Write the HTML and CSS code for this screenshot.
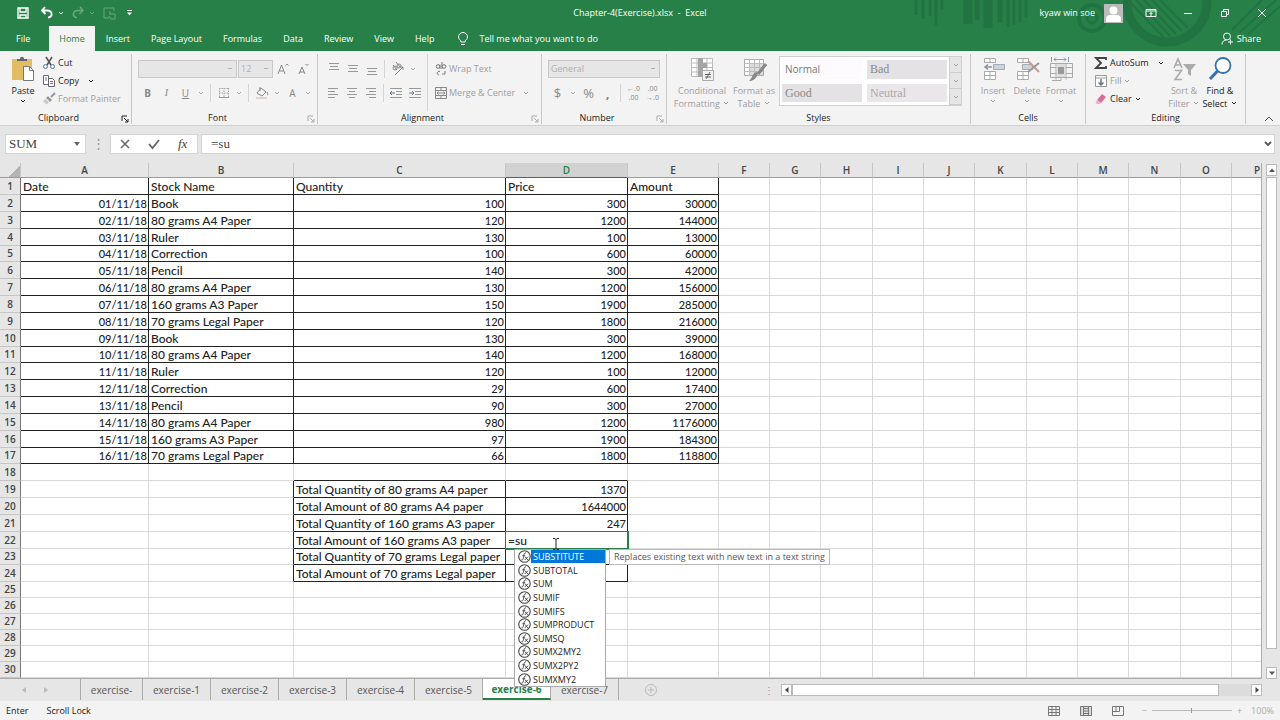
FILE: index.html
```
<!DOCTYPE html>
<html lang="en">
<head>
    <meta charset="UTF-8">
    <meta name="viewport" content="width=device-width, initial-scale=1.0">
    <title>Chapter-4(Exercise).xlsx - Excel</title>
    <link rel="stylesheet" href="styles.css">
</head>
<body>

<svg class="defs" aria-hidden="true">
    <symbol id="caret" viewBox="0 0 8 8"><path d="M2 3l2 2 2-2" fill="none" stroke="currentColor"/></symbol>
    <symbol id="launch" viewBox="0 0 8 8"><path d="M1 6V1h5M3 3l4 4M7 4v3H4" fill="none" stroke="currentColor"/></symbol>
    <symbol id="fx" viewBox="0 0 12 12"><circle cx="6" cy="6" r="5.3" fill="#fff" stroke="#444"/><path d="M7.5 2.7c-2-.6-2 2-2.4 4s-.7 2.8-1.9 2.4M4 5.3h2.6M6.6 6.2l2.4 3M9.2 6.2l-3 3" fill="none" stroke="#444" stroke-width=".9"/></symbol>
</svg>

<header class="top">
    <svg class="pattern" viewBox="0 0 400 51" aria-hidden="true">
        <g stroke="#227342" fill="none">
            <path stroke-width="3" d="M36 0v15M43 0v19M50 0v16M56 0v25M62 0v10M128 0v27M134 0v25M140 0v22M146 0v18"/>
            <path stroke-width="9" d="M88 0v24M108 0v28"/>
            <path stroke-width="5" d="M97 0v20M120 0v22"/>
            <circle cx="212" cy="18" r="13" stroke-width="4"/>
            <circle cx="212" cy="18" r="5" stroke-width="3"/>
            <circle cx="287" cy="2" r="40" stroke-width="9"/>
            <path stroke-width="2" d="M248 0l36 38M256 0l34 36M264 0l32 34M272 0l30 31M280 0l28 28M360 32l36-32M352 30l30-30M368 34l32-28"/>
        </g>
    </svg>
    <div class="title-bar">
        <div class="quick">
            <button type="button" aria-label="Save"><svg width="14" height="14" viewBox="0 0 14 14"><path d="M2 2h10v10H2zM4 2v4h6V2M4 12V9h6v3" fill="none" stroke="#fff" stroke-width="1.4"/></svg></button>
            <button type="button" aria-label="Undo"><svg width="14" height="14" viewBox="0 0 14 14"><path d="M5 1L2 4.500 5.500 8M2 4.500h5c6 0 6 7 1 7" fill="none" stroke="#fff" stroke-width="1.8"/></svg></button>
            <svg class="caret" width="8" height="8"><use href="#caret"/></svg>
            <button type="button" class="faded" aria-label="Redo"><svg width="14" height="14" viewBox="0 0 14 14"><path d="M9 1l3 3.500L8.500 8M12 4.500H7c-6 0-6 7-1 7" fill="none" stroke="#fff" stroke-width="1.600"/></svg></button>
            <svg class="caret faded" width="8" height="8"><use href="#caret"/></svg>
            <button type="button" class="faded" aria-label="Touch mode"><svg width="16" height="14" viewBox="0 0 16 14"><path d="M7 12H2V2h10v3M8 9V5M8 8h5v5H9l-2-3" fill="none" stroke="#fff"/></svg></button>
            <button type="button" aria-label="Customize toolbar"><svg width="10" height="10" viewBox="0 0 10 10"><path d="M3 2.500h5" stroke="#fff"/><path d="M3 4.500h5L5.500 7.500z" fill="#fff"/></svg></button>
        </div>
        <div class="file-name">Chapter-4(Exercise).xlsx&nbsp; -&nbsp; Excel</div>
        <div class="account">
            <span>kyaw win soe</span>
            <svg class="avatar" width="19" height="19" viewBox="0 0 19 19"><path d="M0 0h19v19H0z" fill="#b9bdb9"/><circle cx="9.500" cy="6.500" r="4" fill="#fff"/><path d="M2 18v-3c0-3 2-4 4-4h7c2 0 4 1 4 4v3z" fill="#fff"/></svg>
            <div class="window-buttons">
                <button type="button" aria-label="Ribbon options"><svg width="12" height="12" viewBox="0 0 12 12"><path d="M1 2.500h10v7H1zM1 4h10M6 9V5.500M4.500 7L6 5.500 7.500 7" fill="none" stroke="#fff"/></svg></button>
                <button type="button" aria-label="Minimize"><svg width="10" height="10" viewBox="0 0 10 10"><path d="M1 5.500h8" stroke="#fff"/></svg></button>
                <button type="button" aria-label="Restore"><svg width="10" height="10" viewBox="0 0 10 10"><path d="M1.500 3.500h5v5h-5zM3.500 3V1.500h5v5H7" fill="none" stroke="#fff"/></svg></button>
                <button type="button" aria-label="Close"><svg width="10" height="10" viewBox="0 0 10 10"><path d="M1 1l8 8M9 1L1 9" stroke="#fff"/></svg></button>
            </div>
        </div>
    </div>
    <nav class="menu">
        <a href="#">File</a>
        <a href="#" class="active">Home</a>
        <a href="#">Insert</a>
        <a href="#">Page Layout</a>
        <a href="#">Formulas</a>
        <a href="#">Data</a>
        <a href="#">Review</a>
        <a href="#">View</a>
        <a href="#">Help</a>
        <a href="#" class="tell"><svg width="12" height="14" viewBox="0 0 12 14"><path d="M4 10c0-2-2.500-2.500-2.500-5a4.500 4.500 0 0 1 9 0c0 2.500-2.500 3-2.500 5zM4 12.500h4" fill="none" stroke="#fff"/></svg>Tell me what you want to do</a>
        <a href="#" class="share"><svg width="13" height="13" viewBox="0 0 13 13"><circle cx="6" cy="4.500" r="3.500" fill="none" stroke="#fff"/><path d="M1 12.500c0-3 2-4.500 4.500-4.500M9.500 7.500v5M7 10h5" fill="none" stroke="#fff"/></svg>Share</a>
    </nav>
</header>

<section class="ribbon">
    <div class="group clipboard">
        <div class="tools">
            <button type="button" class="big">
                <svg width="26" height="26" viewBox="0 0 26 26"><path d="M2 3h20v21H2z" fill="#e3bd62"/><path d="M7 5V3h3c0-3 4-3 4 0h3v2z" fill="#666"/><path d="M13.500 10.500h6l4 4v10h-10z" fill="#fff" stroke="#777"/><path d="M19.500 10.500v4h4" fill="none" stroke="#777"/></svg>
                <span>Paste</span>
                <svg width="8" height="8"><use href="#caret"/></svg>
            </button>
            <div class="stack">
                <button type="button"><svg width="14" height="14" viewBox="0 0 14 14"><path d="M4 1l5 8M10 1L5 9" stroke="#555" stroke-width="1.500"/><circle cx="3.500" cy="10.500" r="2" fill="none" stroke="#4a7ba8"/><circle cx="10.500" cy="10.500" r="2" fill="none" stroke="#4a7ba8"/></svg>Cut</button>
                <button type="button"><svg width="14" height="14" viewBox="0 0 14 14"><path d="M1.500 1.500h5v9h-5zM6.500 4.500h4l2 2v6h-6z" fill="#fff" stroke="#667"/><path d="M3 4h2M3 6h2M8 7.500h3M8 9.500h3" stroke="#4a7ba8"/></svg>Copy<svg class="gap" width="8" height="8"><use href="#caret"/></svg></button>
                <button type="button" disabled><svg width="14" height="14" viewBox="0 0 14 14"><path d="M13 1L9 5" stroke="#999" stroke-width="2"/><path d="M6 4l4 4-2 2-4-4z" fill="#999"/><path d="M3.500 7L7 10.500l-3 2L1 9z" fill="#c9c9c9"/></svg>Format Painter</button>
            </div>
        </div>
        <div class="label">Clipboard<svg width="8" height="8"><use href="#launch"/></svg></div>
    </div>

    <div class="group font">
        <div class="rows">
            <div class="row">
                <select class="font-name" aria-label="Font" disabled><option></option></select>
                <select class="font-size" aria-label="Font size" disabled><option>12</option></select>
                <button type="button" class="letter" disabled aria-label="Increase font size"><svg width="14" height="14" viewBox="0 0 14 14"><path d="M2 12L5.500 3 9 12M3.500 9h4M9.500 3.500L11 2l1.500 1.500" fill="none" stroke="#888"/></svg></button>
                <button type="button" class="letter" disabled aria-label="Decrease font size"><svg width="14" height="14" viewBox="0 0 14 14"><path d="M3 12l3-7 3 7M4 10h4M9.500 2L11 3.500 12.500 2" fill="none" stroke="#888"/></svg></button>
            </div>
            <div class="row">
                <button type="button" class="glyph" disabled><b>B</b></button>
                <button type="button" class="glyph serif" disabled><i>I</i></button>
                <button type="button" class="glyph" disabled><u>U</u></button>
                <svg class="drop" width="8" height="8"><use href="#caret"/></svg>
                <span class="sep"></span>
                <button type="button" class="glyph" disabled aria-label="Borders"><svg width="12" height="12" viewBox="0 0 12 12"><path d="M1.500 1v9M6 1v9M10.500 1v9M1 1.500h10M1 6h10" fill="none" stroke="#aaa" stroke-dasharray="1.500 1"/><path d="M1 10.500h10" stroke="#999"/></svg></button>
                <svg class="drop" width="8" height="8"><use href="#caret"/></svg>
                <span class="sep"></span>
                <button type="button" class="glyph" disabled aria-label="Fill color"><svg width="14" height="14" viewBox="0 0 14 14"><path d="M6 2l5 4-4 4-5-3zM5 5V1M12 6c1 2 1 3 0 3" fill="none" stroke="#888"/><path d="M1 11h11v2H1z" fill="#e3d3c8"/></svg></button>
                <svg class="drop" width="8" height="8"><use href="#caret"/></svg>
                <button type="button" class="glyph" disabled>A</button>
                <svg class="drop" width="8" height="8"><use href="#caret"/></svg>
            </div>
        </div>
        <div class="label">Font<svg class="off" width="8" height="8"><use href="#launch"/></svg></div>
    </div>

    <div class="group alignment">
        <div class="tools">
            <div class="rows">
                <div class="row">
                    <button type="button" class="glyph" disabled aria-label="Top align"><svg width="12" height="12" viewBox="0 0 12 12"><path d="M1 .5h10M2 3.500h8M1 6.500h10" stroke="#999"/></svg></button>
                    <button type="button" class="glyph" disabled aria-label="Middle align"><svg width="12" height="12" viewBox="0 0 12 12"><path d="M1 2.500h10M2 5.500h8M1 8.500h10" stroke="#999"/></svg></button>
                    <button type="button" class="glyph" disabled aria-label="Bottom align"><svg width="12" height="12" viewBox="0 0 12 12"><path d="M1 5.500h10M2 8.500h8M1 11.500h10" stroke="#999"/></svg></button>
                    <span class="sep"></span>
                    <button type="button" class="glyph" disabled aria-label="Orientation"><svg width="14" height="14" viewBox="0 0 14 14"><circle cx="4" cy="6" r="2" fill="none" stroke="#888"/><circle cx="8" cy="4" r="2" fill="none" stroke="#888"/><path d="M2 3l4 5M5 0l4 5M4 13l8-8M12 8V5H9" fill="none" stroke="#888"/></svg></button>
                    <svg class="drop" width="8" height="8"><use href="#caret"/></svg>
                </div>
                <div class="row">
                    <button type="button" class="glyph" disabled aria-label="Align left"><svg width="12" height="12" viewBox="0 0 12 12"><path d="M1 1.500h10M1 4.500h7M1 7.500h10M1 10.500h7" stroke="#999"/></svg></button>
                    <button type="button" class="glyph" disabled aria-label="Center"><svg width="12" height="12" viewBox="0 0 12 12"><path d="M1 1.500h10M3 4.500h6M1 7.500h10M3 10.500h6" stroke="#999"/></svg></button>
                    <button type="button" class="glyph" disabled aria-label="Align right"><svg width="12" height="12" viewBox="0 0 12 12"><path d="M1 1.500h10M4 4.500h7M1 7.500h10M4 10.500h7" stroke="#999"/></svg></button>
                    <span class="sep"></span>
                    <button type="button" class="glyph" disabled aria-label="Decrease indent"><svg width="14" height="12" viewBox="0 0 14 12"><path d="M1 1.500h12M7 4.500h6M7 7.500h6M1 10.500h12" stroke="#999"/><path d="M6 6H1M3 4L1 6l2 2" fill="none" stroke="#678"/></svg></button>
                    <button type="button" class="glyph" disabled aria-label="Increase indent"><svg width="14" height="12" viewBox="0 0 14 12"><path d="M1 1.500h12M7 4.500h6M7 7.500h6M1 10.500h12" stroke="#999"/><path d="M1 6h5M4 4l2 2-2 2" fill="none" stroke="#678"/></svg></button>
                </div>
            </div>
            <div class="rows wide">
                <div class="row">
                    <button type="button" disabled><svg width="14" height="14" viewBox="0 0 14 14"><circle cx="4" cy="4.500" r="1.800" fill="none" stroke="#777"/><path d="M6 2.500V7M8 0v7M6 9.500c-3-1-4 3-1 3.500M8 12h3V9" fill="none" stroke="#777"/><circle cx="10" cy="4.500" r="1.800" fill="none" stroke="#777"/></svg>Wrap Text</button>
                </div>
                <div class="row">
                    <button type="button" disabled><svg width="14" height="14" viewBox="0 0 14 14"><path d="M1.500 1.500h11v11h-11zM1.500 4.500h11M1.500 9.500h11M7 1.500v3M7 9.500v3M3 7h8M4.500 5.500L3 7l1.500 1.500M9.500 5.500L11 7 9.500 8.500" fill="none" stroke="#888"/></svg>Merge &amp; Center<svg class="gap" width="8" height="8"><use href="#caret"/></svg></button>
                </div>
            </div>
        </div>
        <div class="label">Alignment<svg class="off" width="8" height="8"><use href="#launch"/></svg></div>
    </div>

    <div class="group number">
        <div class="rows">
            <div class="row">
                <select class="format" aria-label="Number format" disabled><option>General</option></select>
            </div>
            <div class="row">
                <button type="button" class="glyph large" disabled>$</button>
                <svg class="drop" width="8" height="8"><use href="#caret"/></svg>
                <button type="button" class="glyph large" disabled>%</button>
                <button type="button" class="glyph large" disabled><b>,</b></button>
                <span class="sep"></span>
                <button type="button" class="glyph tiny" disabled><span>←.0</span><span>.00</span></button>
                <button type="button" class="glyph tiny" disabled><span>.00</span><span>→.0</span></button>
            </div>
        </div>
        <div class="label">Number<svg class="off" width="8" height="8"><use href="#launch"/></svg></div>
    </div>

    <div class="group styles">
        <div class="tools">
            <button type="button" class="big" disabled>
                <svg width="26" height="26" viewBox="0 0 26 26"><path d="M2.500 2.500h21v18h-21zM2.500 7h21M2.500 11.500h21M2.500 16h21M8 2.500v18M18 2.500v18" fill="#fff" stroke="#bbb"/><path d="M9 2h5v5H9zM9 7h9v5H9zM9 12h5v9H9z" fill="#a5a5a5"/><path d="M13.500 14.500h11v10h-11z" fill="#f3f3f3" stroke="#aaa"/><path d="M16 18.500h6M16 21h6M21 16l-4 7" stroke="#666"/></svg>
                <span>Conditional<br>Formatting <svg width="8" height="8"><use href="#caret"/></svg></span>
            </button>
            <button type="button" class="big" disabled>
                <svg width="26" height="26" viewBox="0 0 26 26"><path d="M3.500 3.500h19v16h-19z" fill="#fff" stroke="#aaa"/><path d="M9 8h13v11H9z" fill="#ddd"/><path d="M3.500 7.500h19M3.500 11.500h19M3.500 15.500h19M8.500 3.500v16M13.500 3.500v16M18.500 3.500v16" stroke="#bbb"/><path d="M25 8l-8 10" stroke="#888" stroke-width="3"/><path d="M17 17c-2 7-6 8-9 8 3-2 3-7 7-9z" fill="#888"/></svg>
                <span>Format as<br>Table <svg width="8" height="8"><use href="#caret"/></svg></span>
            </button>
            <div class="gallery">
                <div class="swatches">
                    <button type="button" class="normal" disabled>Normal</button>
                    <button type="button" class="bad" disabled>Bad</button>
                    <button type="button" class="good" disabled>Good</button>
                    <button type="button" class="neutral" disabled>Neutral</button>
                </div>
                <div class="steps">
                    <button type="button" disabled aria-label="Previous"><svg width="8" height="8"><use href="#caret"/></svg></button>
                    <button type="button" disabled aria-label="Next"><svg width="8" height="8"><use href="#caret"/></svg></button>
                    <button type="button" disabled aria-label="More"><svg width="8" height="8"><use href="#caret"/></svg></button>
                </div>
            </div>
        </div>
        <div class="label">Styles</div>
    </div>

    <div class="group cells">
        <div class="tools">
            <button type="button" class="big" disabled>
                <svg width="26" height="26" viewBox="0 0 26 26"><path d="M4.500 2.500h11v4h-11zM10 2.500v4M4.500 15.500h11v8h-11zM10 15.500v8M4.500 19.500h11" fill="#fff" stroke="#aaa"/><path d="M13.500 8.500h11v5h-11z" fill="#cdd3da" stroke="#a5abb2"/><path d="M12 11H5M8 8.500L5 11l3 2.500" fill="none" stroke="#8a93a0" stroke-width="1.500"/></svg>
                <span>Insert</span>
                <svg width="8" height="8"><use href="#caret"/></svg>
            </button>
            <button type="button" class="big" disabled>
                <svg width="26" height="26" viewBox="0 0 26 26"><path d="M3.500 2.500h11v4h-11zM9 2.500v4M3.500 15.500h11v8h-11zM9 15.500v8M3.500 19.500h11" fill="#fff" stroke="#aaa"/><path d="M8.500 8.500h10v5h-10z" fill="#cdd3da" stroke="#a5abb2"/><path d="M14 5l11 11" stroke="#c79a90" stroke-width="2"/><path d="M25 7L14 16" stroke="#999" stroke-width="2"/></svg>
                <span>Delete</span>
                <svg width="8" height="8"><use href="#caret"/></svg>
            </button>
            <button type="button" class="big" disabled>
                <svg width="26" height="26" viewBox="0 0 26 26"><path d="M3.500 1v5M20.500 1v5M6 3.500h12M8 1.500L6 3.500l2 2M16 1.500l2 2-2 2" fill="none" stroke="#7f9fc0"/><path d="M2.500 7.500h22v14h-22zM2.500 11.500h22M2.500 17.500h22M8 7.500v16M18 7.500v16M4 24.500h9v-3" fill="none" stroke="#aaa"/><path d="M8.500 8h9v13h-9z" fill="#ddd"/><path d="M10 11h6v7h-6z" fill="#999"/></svg>
                <span>Format</span>
                <svg width="8" height="8"><use href="#caret"/></svg>
            </button>
        </div>
        <div class="label">Cells</div>
    </div>

    <div class="group editing">
        <div class="tools">
            <div class="stack">
                <button type="button"><svg width="14" height="14" viewBox="0 0 14 14"><path d="M12 4V2H2l5 5-5 5h10v-2" fill="none" stroke="#444" stroke-width="1.800"/></svg>AutoSum<svg class="gap" width="8" height="8"><use href="#caret"/></svg></button>
                <button type="button" disabled><svg width="14" height="14" viewBox="0 0 14 14"><path d="M1.500 1.500h11v11h-11zM1.500 4h11" fill="#fff" stroke="#999"/><path d="M7 5v6M4.500 8.500L7 11l2.500-2.500" fill="none" stroke="#678" stroke-width="1.500"/></svg>Fill<svg width="8" height="8"><use href="#caret"/></svg></button>
                <button type="button"><svg width="14" height="14" viewBox="0 0 14 14"><path d="M8 2l4 3-5 6-4-3z" fill="#d86f9b"/><path d="M3 8l4 3-1 1H3L1.500 10.500z" fill="#e7b3c8"/></svg>Clear<svg width="8" height="8"><use href="#caret"/></svg></button>
            </div>
            <button type="button" class="big" disabled>
                <svg width="26" height="26" viewBox="0 0 26 26"><path d="M3 12L7 3l4 9M4.500 9h5M4 14.500h6.500L4 23.500h7" fill="none" stroke="#aaa" stroke-width="1.600"/><path d="M12 8h13l-5 6v6l-3-2v-4z" fill="#aaa"/></svg>
                <span>Sort &amp;<br>Filter <svg width="8" height="8"><use href="#caret"/></svg></span>
            </button>
            <button type="button" class="big">
                <svg width="26" height="26" viewBox="0 0 26 26"><circle cx="16" cy="9.500" r="7.500" fill="#fff" stroke="#3672ad" stroke-width="1.800"/><path d="M10.500 15L3 23" stroke="#3672ad" stroke-width="3"/></svg>
                <span>Find &amp;<br>Select <svg width="8" height="8"><use href="#caret"/></svg></span>
            </button>
        </div>
        <div class="label">Editing</div>
    </div>
    <button type="button" class="collapse" aria-label="Collapse the ribbon"><svg width="10" height="6" viewBox="0 0 10 6"><path d="M1 5l4-4 4 4" fill="none" stroke="#555"/></svg></button>
</section>

<section class="formula-bar">
    <div class="name-box">
        <input type="text" aria-label="Name box" value="SUM">
        <svg width="8" height="6" viewBox="0 0 8 6"><path d="M1 1h6L4 5z" fill="#666"/></svg>
    </div>
    <span class="dots">⋮</span>
    <div class="formula-buttons">
        <button type="button" aria-label="Cancel"><svg width="12" height="12" viewBox="0 0 12 12"><path d="M2 2l8 8M10 2l-8 8" stroke="#666" stroke-width="1.500"/></svg></button>
        <button type="button" aria-label="Enter"><svg width="12" height="12" viewBox="0 0 12 12"><path d="M1 6l3.500 4L11 2" fill="none" stroke="#666" stroke-width="1.800"/></svg></button>
        <button type="button" aria-label="Insert function" class="serif"><i>fx</i></button>
    </div>
    <div class="formula">
        <input type="text" aria-label="Formula" value="=su">
        <svg width="8" height="6" viewBox="0 0 8 6"><path d="M1 1l3 3 3-3" fill="none" stroke="#555" stroke-width="1.800"/></svg>
    </div>
</section>

<main class="sheet">
    <div class="grid-view">
        <table class="grid" id="grid"></table>
    </div>
    <div class="scroll-v">
        <button type="button" aria-label="Scroll up"><svg width="8" height="8" viewBox="0 0 8 8"><path d="M1 6h6L4 2.500z" fill="#555"/></svg></button>
        <div class="thumb"></div>
        <button type="button" aria-label="Scroll down"><svg width="8" height="8" viewBox="0 0 8 8"><path d="M1 2.500h6L4 6z" fill="#555"/></svg></button>
    </div>

    <ul class="suggest" id="suggest"></ul>
    <div class="hint">Replaces existing text with new text in a text string</div>
    <svg class="pointer" width="8" height="14" viewBox="0 0 8 14"><path d="M1 1.500h2l1 1 1-1h2M4 2v10M1 12.500h2l1-1 1 1h2" fill="none" stroke="#222"/></svg>
</main>

<footer>
    <div class="tab-bar">
        <div class="tab-arrows">
            <svg width="6" height="8" viewBox="0 0 6 8"><path d="M5 1v6L1 4z" fill="#bbb"/></svg>
            <svg width="6" height="8" viewBox="0 0 6 8"><path d="M1 1v6l4-3z" fill="#bbb"/></svg>
        </div>
        <div class="tabs">
            <button type="button" class="first">exercise-</button>
            <button type="button">exercise-1</button>
            <button type="button">exercise-2</button>
            <button type="button">exercise-3</button>
            <button type="button">exercise-4</button>
            <button type="button">exercise-5</button>
            <button type="button" class="active">exercise-6</button>
            <button type="button">exercise-7</button>
        </div>
        <button type="button" class="add" aria-label="New sheet"><svg width="14" height="14" viewBox="0 0 14 14"><circle cx="7" cy="7" r="5.500" fill="none" stroke="#bbb"/><path d="M7 4v6M4 7h6" stroke="#bbb"/></svg></button>
        <span class="dots">⋮</span>
        <div class="scroll-h">
            <button type="button" aria-label="Scroll left"><svg width="8" height="8" viewBox="0 0 8 8"><path d="M5.500 1v6L2 4z" fill="#444"/></svg></button>
            <div class="thumb"></div>
            <button type="button" aria-label="Scroll right"><svg width="8" height="8" viewBox="0 0 8 8"><path d="M2.500 1v6L6 4z" fill="#444"/></svg></button>
        </div>
    </div>
    <div class="status">
        <span>Enter</span>
        <span>Scroll Lock</span>
        <div class="views">
            <svg width="12" height="12" viewBox="0 0 12 12"><path d="M.5 1.500h11v9H.5zM.5 4.500h11M.5 7.500h11M4 1.500v9M8 1.500v9" fill="none" stroke="#777"/></svg>
            <svg width="12" height="12" viewBox="0 0 12 12"><path d="M.5 1.500h11v9H.5z" fill="#ddd" stroke="#777"/><path d="M3.500 2v8M8.500 2v8M4 3.500h4M4 6h4M4 8.500h4" stroke="#777"/></svg>
            <svg width="12" height="12" viewBox="0 0 12 12"><path d="M.5 1.500h11v9H.5zM.5 6.500h7v-5M4 1.500v5" fill="none" stroke="#777"/></svg>
        </div>
        <div class="zoom">
            <span>−</span>
            <input type="range" aria-label="Zoom" min="10" max="190" value="100" disabled>
            <span>+</span>
            <span class="percent">100%</span>
        </div>
    </div>
</footer>

<script src="script.js"></script>
</body>
</html>
```
FILE: styles.css
```
* {
    margin: 0;
    padding: 0;
    box-sizing: border-box;
}

body {
    font-family: 'Open Sans', 'Noto Sans', sans-serif;
    font-size: 9px;
    font-weight: 500;
    line-height: 14px;
    color: #222;
    background: #e6e6e6;
    height: 100vh;
    min-height: 480px;
    display: flex;
    flex-direction: column;
    overflow: hidden;
}

button, input, select {
    font: inherit;
    color: inherit;
    background: none;
    border: none;
    outline: none;
}

button {
    display: flex;
    align-items: center;
    justify-content: center;
    white-space: nowrap;
}

button:disabled {
    color: #a0a0a0;
}

svg {
    flex: none;
}

.defs {
    position: absolute;
    width: 0;
    height: 0;
}

.serif {
    font-family: 'Liberation Serif', serif;
}

/* title bar and menu */
.top {
    position: relative;
    background: #278048;
    color: #fff;
}

.pattern {
    position: absolute;
    right: 0;
    top: 0;
    width: 400px;
    height: 51px;
}

.title-bar {
    position: relative;
    display: grid;
    grid-template-columns: 1fr auto 1fr;
    align-items: center;
    height: 26px;
}

.quick {
    display: flex;
    align-items: center;
    gap: 6px;
    padding-left: 16px;
}

.quick button:first-child {
    margin-right: 4px;
}

.quick .caret {
    margin-left: -3px;
}

.faded {
    opacity: 0.3;
}

.account {
    display: flex;
    align-items: center;
    justify-content: flex-end;
    gap: 9px;
}

.window-buttons {
    display: flex;
}

.window-buttons button {
    width: 37px;
    height: 26px;
}

.menu {
    position: relative;
    display: flex;
    gap: 1px;
    height: 25px;
    padding-left: 6px;
}

.menu a {
    display: flex;
    align-items: center;
    padding: 0 10px;
    color: #fff;
    text-decoration: none;
}

.menu a:first-child {
    margin-right: 8px;
}

.menu .active {
    background: #f3f3f3;
    color: #278048;
}

.menu .tell {
    gap: 10px;
    padding-left: 12px;
}

.menu .share {
    gap: 3px;
    margin-left: auto;
    padding-right: 19px;
}

/* ribbon */
.ribbon {
    display: flex;
    height: 75px;
    background: #f3f3f3;
    border-bottom: 1px solid #d0d0d0;
    padding-top: 3px;
}

.group {
    display: flex;
    flex-direction: column;
    flex: none;
    margin-bottom: 1px;
    border-right: 1px solid #c6c6c6;
}

.clipboard { width: 132px; }
.font { width: 186px; }
.alignment { width: 224px; }
.number { width: 125px; }
.styles { width: 304px; }
.cells { width: 115px; }
.editing { width: 160px; }

.tools {
    display: flex;
    flex: 1;
}

.label {
    position: relative;
    text-align: center;
    padding-right: 14px;
    height: 13px;
    line-height: 14px;
}

.label svg {
    position: absolute;
    right: 2px;
    top: 4px;
}

.off {
    color: #aaa;
}

.styles .label, .cells .label, .editing .label {
    padding-right: 0;
}

.big {
    flex-direction: column;
    justify-content: flex-start;
    line-height: 13px;
    padding-top: 2px;
}

.big > span {
    padding-top: 2px;
}

.clipboard .big {
    width: 42px;
    padding-left: 4px;
}

.stack {
    display: flex;
    flex-direction: column;
}

.stack button {
    height: 18px;
    gap: 2px;
    justify-content: flex-start;
}

.stack .gap {
    margin-left: 6px;
}

.rows {
    display: flex;
    flex-direction: column;
    flex: 1;
    gap: 5px;
    padding: 5px 0 0 6px;
}

.tools .rows {
    flex: none;
}

.row {
    display: flex;
    align-items: center;
    height: 19px;
}

select:disabled {
    appearance: none;
    height: 18px;
    padding-left: 2px;
    color: #b0b0b0;
    opacity: 1;
    background: linear-gradient(#b0b0b0, #b0b0b0) right 4px center / 4px 1px no-repeat #e6e6e6;
    border: 1px solid #c9c9c9;
}

.font-name {
    width: 99px;
    margin-right: 1px;
}

.font-size {
    width: 35px;
}

.format {
    width: 112px;
}

.letter {
    width: 20px;
}

.glyph {
    width: 19px;
    height: 19px;
}

.row .glyph:disabled {
    color: #888;
}

.font .glyph {
    font-size: 10px;
}

.row .large {
    font-size: 13px;
}

.tiny {
    flex-direction: column;
    font-size: 7px;
    line-height: 9px;
}

.drop {
    color: #aaa;
    margin: 0 2px;
}

.sep {
    width: 1px;
    height: 18px;
    margin: 0 3px;
    background: #d4d4d4;
}

.wide {
    border-left: 1px solid #d4d4d4;
    margin-left: 3px;
}

.alignment .rows:first-child {
    width: 106px;
}

.wide button {
    gap: 1px;
}

.wide .gap {
    margin-left: 6px;
}

.styles .big {
    width: 50px;
}

.styles .big:first-child {
    width: 54px;
    margin-left: 8px;
}

.styles .tools {
    padding-right: 8px;
}

.gallery {
    display: flex;
    flex: 1;
    height: 50px;
    margin-top: 2px;
    background: #fff;
    border: 1px solid #d0d0d0;
}

.swatches {
    display: grid;
    grid-template-columns: 1fr 1fr;
    gap: 5px;
    flex: 1;
    padding: 3px 2px;
}

.swatches button {
    justify-content: flex-start;
    padding-left: 3px;
    font-size: 10px;
    color: #888;
    background: #e4e2e5;
}

.swatches .normal {
    background: #fdfbfd;
    color: #777;
}

.swatches .good, .swatches .neutral, .swatches .bad {
    font-family: 'Liberation Serif', serif;
    font-size: 12px;
}

.swatches .neutral {
    background: #ebe6e9;
    color: #aaa;
}

.steps {
    display: flex;
    flex-direction: column;
    width: 12px;
    background: #e6e6e6;
}

.steps button {
    flex: 1;
    border-left: 1px solid #ccc;
    border-bottom: 1px solid #ccc;
}

.cells .tools {
    padding-left: 5px;
}

.cells .big {
    width: 34px;
}

.editing .stack {
    width: 80px;
    padding-left: 8px;
}

.editing .big {
    width: 36px;
}

.collapse {
    margin: auto 0 3px auto;
    padding-right: 6px;
}

/* formula bar */
.formula-bar {
    display: flex;
    align-items: center;
    height: 37px;
    padding: 0 5px 2px;
    font-family: 'Liberation Serif', serif;
    font-size: 13px;
    color: #444;
}

.name-box, .formula, .formula-buttons {
    display: flex;
    align-items: center;
    height: 20px;
    background: #fff;
    border: 1px solid #d4d4d4;
}

.name-box {
    width: 81px;
    padding: 0 4px 0 3px;
}

.name-box input, .formula input {
    flex: 1;
    min-width: 0;
}

.dots {
    width: 24px;
    text-align: center;
    color: #999;
}

.formula-buttons {
    width: 88px;
    margin-right: 3px;
}

.formula-buttons button {
    flex: 1;
}

.formula {
    flex: 1;
    padding: 0 2px 0 9px;
}

/* sheet */
.sheet {
    position: relative;
    display: flex;
    flex: 1;
    min-height: 0;
}

.grid-view {
    flex: 1;
    overflow: hidden;
    background: #fff;
    border-bottom: 1px solid #ababab;
    border-right: 1px solid #ababab;
}

.grid {
    table-layout: fixed;
    width: 0;
    border-collapse: separate;
    border-spacing: 0;
    font-family: Lato, sans-serif;
    font-size: 12px;
    line-height: 15px;
}

.grid .col-num { width: 21px; }
.grid .col-a { width: 128px; }
.grid .col-b { width: 145px; }
.grid .col-c { width: 212px; }
.grid .col-d { width: 122px; }
.grid .col-e { width: 91px; }
.grid .col-rest { width: 51px; }
.grid .col-rest:nth-child(3n) { width: 52px; }

.grid th {
    font-family: 'Open Sans', sans-serif;
    font-size: 10px;
    font-weight: 600;
    text-align: center;
    color: #444;
    background: #e6e6e6;
    border-right: 1px solid #c6c6c6;
    border-bottom: 1px solid #c6c6c6;
    overflow: hidden;
}

.grid thead th {
    height: 15px;
    line-height: 14px;
    border-bottom-color: #9c9c9c;
}

.grid thead th:first-child {
    background: linear-gradient(135deg, #e6e6e6 65%, #b4b4b4 65%);
}

.grid tbody th {
    border-right-color: #777;
}

.grid thead .current {
    color: #278048;
    background: #d2d2d2;
    border-bottom-color: #278048;
}

.grid tbody tr {
    height: 17px;
}

/* every sixth row and the empty rows at the end are a little lower */
.grid tbody tr:nth-child(6n+5), .grid tbody tr:nth-child(n+25) {
    height: 16px;
}

.grid td {
    padding: 0 1px 0 2px;
    border-right: 1px solid #d9d9d9;
    border-bottom: 1px solid #d9d9d9;
    color: #222;
    white-space: nowrap;
}

.grid .num {
    font-size: 11px;
    text-align: right;
}

.grid .right-line {
    border-right-color: #222;
}

.grid .bottom-line {
    border-bottom-color: #222;
}

.grid .editing-cell {
    outline: 1px solid #278048;
    border-color: #278048;
}

.editing-cell input {
    display: block;
    width: 100%;
    height: 15px;
}

.scroll-v {
    display: flex;
    flex-direction: column;
    width: 18px;
    padding: 1px 3px 0 4px;
}

.scroll-v button, .scroll-h button {
    flex: none;
    width: 11px;
    height: 12px;
    background: #fff;
    border: 1px solid #bbb;
}

.scroll-v .thumb {
    flex: 1;
    margin: 1px 0 18px;
    background: #fff;
    border: 1px solid #bbb;
}

.suggest {
    position: absolute;
    left: 514px;
    top: 386px;
    z-index: 2;
    display: grid;
    grid-auto-rows: 1fr;
    width: 92px;
    height: 138px;
    list-style: none;
    background: #fff;
    border: 1px solid #aaa;
}

.suggest li {
    display: flex;
    align-items: center;
    min-height: 0;
    padding-left: 3px;
    line-height: 13px;
}

.suggest span {
    flex: 1;
    padding-left: 2px;
}

.suggest li:first-child span {
    background: #0078d7;
    color: #fff;
}

.hint {
    position: absolute;
    left: 609px;
    top: 386px;
    z-index: 2;
    padding: 0 4px;
    background: #fff;
    border: 1px solid #bbb;
    color: #555;
}

.pointer {
    position: absolute;
    left: 552px;
    top: 374px;
    z-index: 3;
}

/* sheet tabs and status bar */
.tab-bar {
    display: flex;
    align-items: center;
    height: 22px;
    padding-right: 18px;
    font-size: 10px;
    color: #555;
}

.tab-arrows {
    display: flex;
    gap: 16px;
    width: 80px;
    padding-left: 21px;
}

.tabs {
    display: flex;
    height: 21px;
    align-self: flex-start;
}

.tabs button {
    width: 68px;
    border-right: 1px solid #ababab;
}

.tabs .first {
    width: 63px;
    border-left: 1px solid #ababab;
}

.tabs .active {
    background: #fff;
    color: #278048;
    font-weight: 700;
    border-bottom: 2px solid #278048;
}

.add {
    padding-left: 25px;
}

.tab-bar .dots {
    margin-left: auto;
}

.scroll-h {
    display: flex;
    width: 481px;
    background: #dcdcdc;
}

.scroll-h .thumb {
    flex: 1;
    height: 12px;
    margin-right: 32px;
    background: #fff;
    border: 1px solid #bbb;
}

.status {
    display: flex;
    align-items: center;
    gap: 18px;
    height: 19px;
    padding: 0 6px;
    background: #f3f3f3;
}

.views {
    display: flex;
    gap: 20px;
    margin-left: auto;
}

.zoom {
    display: flex;
    align-items: center;
    gap: 5px;
    color: #aaa;
}

.zoom input {
    appearance: none;
    width: 80px;
    height: 1px;
    background: #bbb;
}

.zoom input::-webkit-slider-thumb {
    appearance: none;
    width: 1px;
    height: 5px;
    background: #999;
}

.percent {
    padding-left: 4px;
}
```
FILE: script.js
```
const stock = [
    ['01/11/18', 'Book', 100, 300, 30000],
    ['02/11/18', '80 grams A4 Paper', 120, 1200, 144000],
    ['03/11/18', 'Ruler', 130, 100, 13000],
    ['04/11/18', 'Correction', 100, 600, 60000],
    ['05/11/18', 'Pencil', 140, 300, 42000],
    ['06/11/18', '80 grams A4 Paper', 130, 1200, 156000],
    ['07/11/18', '160 grams A3 Paper', 150, 1900, 285000],
    ['08/11/18', '70 grams Legal Paper', 120, 1800, 216000],
    ['09/11/18', 'Book', 130, 300, 39000],
    ['10/11/18', '80 grams A4 Paper', 140, 1200, 168000],
    ['11/11/18', 'Ruler', 120, 100, 12000],
    ['12/11/18', 'Correction', 29, 600, 17400],
    ['13/11/18', 'Pencil', 90, 300, 27000],
    ['14/11/18', '80 grams A4 Paper', 980, 1200, 1176000],
    ['15/11/18', '160 grams A3 Paper', 97, 1900, 184300],
    ['16/11/18', '70 grams Legal Paper', 66, 1800, 118800]
];

const totals = [
    ['Total Quantity of 80 grams A4 paper', 1370],
    ['Total Amount of 80 grams A4 paper', 1644000],
    ['Total Quantity of 160 grams A3 paper', 247],
    ['Total Amount of 160 grams A3 paper', ''],
    ['Total Quantity of 70 grams Legal paper', ''],
    ['Total Amount of 70 grams Legal paper', '']
];

const functions = ['SUBSTITUTE', 'SUBTOTAL', 'SUM', 'SUMIF', 'SUMIFS', 'SUMPRODUCT', 'SUMSQ', 'SUMX2MY2', 'SUMX2PY2', 'SUMXMY2'];

const letters = 'ABCDEFGHIJKLMNOP'.split('');

function cellValue(row, col) {
    if (row === 1) return ['Date', 'Stock Name', 'Quantity', 'Price', 'Amount'][col] ?? '';
    if (row <= 17) return stock[row - 2][col] ?? '';
    if (row >= 19 && row <= 24 && (col === 2 || col === 3)) return totals[row - 19][col - 2];
    return '';
}

function cellClass(row, col) {
    const names = [];
    const inStock = row <= 17 && col <= 4;
    const inTotals = row >= 19 && row <= 24 && (col === 2 || col === 3);

    if ((row > 1 && row <= 17 && col === 0) || typeof cellValue(row, col) === 'number') names.push('num');
    if (inStock || inTotals || (row >= 19 && row <= 24 && col === 1)) names.push('right-line');
    if (inStock || inTotals || (row === 18 && (col === 2 || col === 3))) names.push('bottom-line');
    if (row === 22 && col === 3) names.push('editing-cell');
    return names.join(' ');
}

let html = '<colgroup><col class="col-num">';
letters.forEach((letter, i) => {
    html += `<col class="${i < 5 ? 'col-' + letter.toLowerCase() : 'col-rest'}">`;
});
html += '</colgroup><thead><tr><th></th>';
letters.forEach(letter => {
    html += `<th${letter === 'D' ? ' class="current"' : ''}>${letter}</th>`;
});
html += '</tr></thead><tbody>';

for (let row = 1; row <= 30; row++) {
    html += `<tr><th>${row}</th>`;
    for (let col = 0; col < letters.length; col++) {
        const editing = row === 22 && col === 3;
        const content = editing ? '<input type="text" aria-label="D22" value="=su">' : cellValue(row, col);
        html += `<td class="${cellClass(row, col)}">${content}</td>`;
    }
    html += '</tr>';
}
document.getElementById('grid').innerHTML = html + '</tbody>';

document.getElementById('suggest').innerHTML = functions
    .map(name => `<li><svg width="13" height="13"><use href="#fx"/></svg><span>${name}</span></li>`)
    .join('');
```
